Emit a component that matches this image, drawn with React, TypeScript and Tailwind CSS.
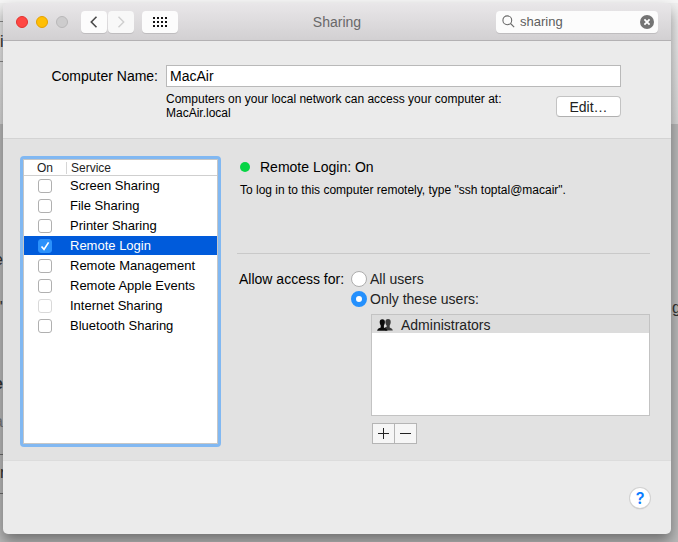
import { useState } from "react";

type Service = { name: string; dim?: boolean };

const services: Service[] = [
  { name: "Screen Sharing" },
  { name: "File Sharing" },
  { name: "Printer Sharing" },
  { name: "Remote Login" },
  { name: "Remote Management" },
  { name: "Remote Apple Events" },
  { name: "Internet Sharing", dim: true },
  { name: "Bluetooth Sharing" },
];

/* Page that lies behind the window and shows at its edges. */
function Backdrop() {
  return (
    <div aria-hidden="true" className="absolute inset-0 overflow-hidden bg-[#bababa] text-[#333] text-base leading-5">
      <div className="absolute inset-x-0 top-0 h-[124px] bg-linear-to-b from-[#f0f0f0] to-[#d8d8d8]" />
      <div className="absolute inset-x-0 top-0 h-[3px] bg-[#f6f6f6]" />
      <div className="absolute left-0 top-[21px] h-[41px] w-2 border-y border-[#8a8a8a]" />
      <span className="absolute left-0 top-8">i</span>
      <span className="absolute -left-[6px] top-[250px]">e</span>
      <span className="absolute -left-[3px] top-[298px]">"</span>
      <span className="absolute -left-[6px] top-[374px] font-bold">e</span>
      <span className="absolute -left-[6px] top-[412px] text-[#777]">a</span>
      <div className="absolute left-0 top-[454px] h-10 w-2 border-y border-[#6b6b6b]" />
      <span className="absolute left-0 top-[463px]">r</span>
      <span className="absolute left-[672px] top-[298px]">g</span>
    </div>
  );
}

function TitleBar() {
  const [query, setQuery] = useState("sharing");
  return (
    <header className="grid h-[38px] grid-cols-[1fr_auto_1fr] items-center border-b border-[#b3b1b3] bg-linear-to-b from-[#e9e7e9] to-[#d2d0d2] pl-[13px] pr-[13px]">
      <div className="flex items-center">
        <div className="flex gap-2">
          <button aria-label="Close" className="size-3 rounded-full border border-[#e2322f] bg-[#ff4743]" />
          <button aria-label="Minimize" className="size-3 rounded-full border border-[#e5a100] bg-[#ffbf05]" />
          <button aria-label="Zoom" disabled className="size-3 rounded-full border border-[#b9b8b9] bg-[#cdcccd]" />
        </div>
        <div className="ml-[13px] flex gap-px">
          <button aria-label="Back" className="grid h-[22px] w-[26px] place-items-center rounded-sm bg-[#fcfcfc] shadow-[0_1px_0_#bfbdbf]">
            <svg width="8" height="12" viewBox="0 0 8 12" fill="none" stroke="#4a4a4a" strokeWidth="1.6"><path d="M6.5 .8 1.3 6l5.2 5.2" /></svg>
          </button>
          <button aria-label="Forward" disabled className="grid h-[22px] w-[26px] place-items-center rounded-sm bg-[#f8f8f8] shadow-[0_1px_0_#bfbdbf]">
            <svg width="8" height="12" viewBox="0 0 8 12" fill="none" stroke="#cfcfcf" strokeWidth="1.4"><path d="M1.5 .8 6.7 6l-5.2 5.2" /></svg>
          </button>
        </div>
        <button aria-label="Show all" className="ml-2 grid h-[22px] w-9 place-items-center rounded-sm bg-[#fcfcfc] shadow-[0_1px_0_#bfbdbf]">
          <svg width="14" height="10" viewBox="0 0 14 10" fill="#111">
            {[0, 4, 8].map((y) => [0, 4, 8, 12].map((x) => <rect key={`${x}-${y}`} x={x} y={y} width="2" height="2" />))}
          </svg>
        </button>
      </div>
      <h1 className="text-sm text-[#696869]">Sharing</h1>
      <div className="flex h-[22px] w-[162px] items-center justify-self-end rounded-sm bg-[#fcfcfc] pl-[6px] pr-1 shadow-[0_1px_0_#bfbdbf]">
        <svg width="13" height="13" viewBox="0 0 13 13" fill="none" stroke="#6a6a6a" strokeWidth="1.1"><circle cx="5.3" cy="5.3" r="4.4" /><path d="m8.5 8.5 3.7 3.7" /></svg>
        <input aria-label="Search" value={query} onChange={(e) => setQuery(e.target.value)} className="ml-[5px] min-w-0 flex-1 text-[13px] text-[#5e5e5e] outline-none" />
        <button aria-label="Clear search" onClick={() => setQuery("")}>
          <svg width="14" height="14" viewBox="0 0 14 14"><circle cx="7" cy="7" r="7" fill="#747474" /><path d="m4.400 4.400 5.200 5.200m0-5.200L4.400 9.600" stroke="#fff" strokeWidth="1.8" /></svg>
        </button>
      </div>
    </header>
  );
}

function ComputerName() {
  return (
    <section className="grid h-[98px] grid-cols-[108px_1fr] content-start gap-x-2 border-b border-[#d3d3d3] pl-[47px] pr-[50px] pt-6 text-sm">
      <label htmlFor="computer-name" className="whitespace-nowrap text-right leading-[22px]">Computer Name:</label>
      <input id="computer-name" defaultValue="MacAir" className="h-[22px] w-full border border-[#b9b9b9] bg-white px-[3px] leading-5 outline-none" />
      <div className="col-start-2 flex justify-between">
        <p className="pt-[5px] text-xs leading-[14px]">
          Computers on your local network can access your computer at:
          <br />
          MacAir.local
        </p>
        <button className="mt-[9px] h-[21px] w-[65px] shrink-0 rounded-sm border border-[#c3c3c3] border-b-[#b0b0b0] bg-white leading-[18px] text-[#222]">Edit…</button>
      </div>
    </section>
  );
}

function ServiceList() {
  const [on, setOn] = useState<string[]>(["Remote Login"]);
  const toggle = (n: string) => setOn(on.includes(n) ? on.filter((s) => s !== n) : [...on, n]);
  return (
    <div className="h-[291px] w-[201px] shrink-0 rounded-sm bg-[#81b8f2] p-[3px]">
      <div className="h-full border border-[#c6c6c6] bg-white">
        <table className="w-full table-fixed border-separate border-spacing-0">
          <thead>
            <tr className="h-4 text-xs leading-[14px] text-[#222]">
              <th className="w-[42px] border-b border-[#cfcfcf] p-0 font-normal">On</th>
              <th className="border-b border-[#cfcfcf] p-0 text-left font-normal"><div className="h-3 border-l border-[#d6d6d6] pl-1 leading-3">Service</div></th>
            </tr>
          </thead>
          <tbody>
            {services.map(({ name, dim }, i) => {
              const id = `service-${i}`;
              const selected = name === "Remote Login";
              return (
                <tr key={name} className={selected ? "h-5 bg-[#005bdb] text-white" : "h-5"}>
                  <td className="border-b border-white p-0">
                    <span className="relative mx-auto block size-[14px]">
                      <input
                        id={id}
                        type="checkbox"
                        checked={on.includes(name)}
                        disabled={dim}
                        onChange={() => toggle(name)}
                        className="block size-[14px] appearance-none rounded-[3px] border border-[#b0b0b0] bg-white checked:border-[#2b91fb] checked:bg-[#2b91fb] disabled:border-[#d9d9d9]"
                      />
                      {on.includes(name) && (
                        <svg className="pointer-events-none absolute inset-0" viewBox="0 0 14 14" fill="none" stroke="#fff" strokeWidth="1.7"><path d="m3.500 7.500 2.500 2.900 4.600-7" /></svg>
                      )}
                    </span>
                  </td>
                  <td className="border-b border-white p-0 pl-1 leading-[18px]"><label htmlFor={id} className="block whitespace-nowrap">{name}</label></td>
                </tr>
              );
            })}
          </tbody>
        </table>
      </div>
    </div>
  );
}

function Access() {
  const [who, setWho] = useState("some");
  const radio = "size-4 appearance-none rounded-full border border-[#adadad] bg-white checked:border-[5px] checked:border-[#2490fd]";
  return (
    <div role="radiogroup" aria-labelledby="access-title" className="grid grid-cols-[106px_1fr] gap-x-[6px] pl-[2px] pt-[15px] text-sm leading-5">
      <div id="access-title" className="whitespace-nowrap">Allow access for:</div>
      <div className="text-[#222]">
        <label className="flex items-center gap-[3px]">
          <input type="radio" name="access" checked={who === "all"} onChange={() => setWho("all")} className={radio} />
          All users
        </label>
        <label className="flex items-center gap-[3px]">
          <input type="radio" name="access" checked={who === "some"} onChange={() => setWho("some")} className={radio} />
          Only these users:
        </label>
        <div className="ml-5 mt-[5px] h-[102px] border border-[#c3c3c3] bg-white">
          <ul>
            <li className="flex h-[18px] items-center bg-[#dcdcdc] pl-[5px] pt-[2px]">
              <svg width="16" height="12" viewBox="0 0 16 12">
                <path fill="#3c3c3c" d="M11 0c1.900 0 2.800 1.200 2.700 3 0 1.500-.5 2.700-1 3.400v2c1.200.7 2.800.9 3.100 3.200H8V8.300l1.600-.2V6.400C8.900 5.600 8.400 4.500 8.400 3 8.400 1.200 9.300 0 11 0Z" />
                <path fill="#0b0b0b" d="M5.300.2C7.100.2 8 1.300 7.900 3.100c0 1.500-.5 2.600-1 3.300v2c1.400.7 3.200 1 3.600 3.400H.1c.3-2.400 2.100-2.700 3.600-3.400v-2C3.200 5.700 2.700 4.600 2.700 3.100 2.700 1.300 3.500.2 5.300.2Z" />
              </svg>
              <span className="ml-2">Administrators</span>
            </li>
          </ul>
        </div>
        <div className="ml-[21px] mt-[7px] inline-flex border border-[#b5b5b5] bg-[#f6f6f6]">
          <button aria-label="Add user" className="grid h-[19px] w-[22px] place-items-center border-r border-[#b5b5b5]">
            <svg width="11" height="11" viewBox="0 0 11 11" stroke="#222"><path d="M0 5.500h11M5.500 0v11" /></svg>
          </button>
          <button aria-label="Remove user" className="grid h-[19px] w-[21px] place-items-center">
            <svg width="11" height="11" viewBox="0 0 11 11" stroke="#222"><path d="M0 5.500h11" /></svg>
          </button>
        </div>
      </div>
    </div>
  );
}

export default function App() {
  return (
    <div className="relative min-h-screen font-['Liberation_Sans',Arial,sans-serif] text-[13px] text-black">
      <Backdrop />
      <div className="relative flex min-h-screen flex-col overflow-hidden pb-2 pl-[3px] pr-[7px] pt-[3px]">
        <main className="flex flex-1 flex-col overflow-hidden rounded-[5px] bg-[#ebebeb] shadow-[0_7px_14px_rgba(0,0,0,0.4)]">
          <TitleBar />
          <ComputerName />
          <section className="flex gap-4 border-b border-[#dcdcdc] bg-[#e2e2e2] pb-[13px] pl-[17px] pr-[21px] pt-[17px]">
            <ServiceList />
            <div className="min-w-0 flex-1">
              <div className="flex h-[98px] flex-col border-b border-[#c9c9c9] pl-[3px]">
                <h2 className="flex items-center gap-[10px] text-sm leading-[22px]">
                  <span className="size-[10px] rounded-full bg-[#06d444]" />
                  Remote Login: On
                </h2>
                <p className="mt-[5px] text-xs leading-[14px]">To log in to this computer remotely, type "ssh toptal@macair".</p>
              </div>
              <Access />
            </div>
          </section>
          <footer className="flex flex-1 items-center justify-end pr-[21px]">
            <button aria-label="Help" className="size-5 rounded-full bg-white font-['Inter',sans-serif] text-base font-semibold leading-5 text-[#0a7cff] shadow-[0_0_0_1px_#d2d2d2,0_1px_1px_#999]">?</button>
          </footer>
        </main>
      </div>
    </div>
  );
}
